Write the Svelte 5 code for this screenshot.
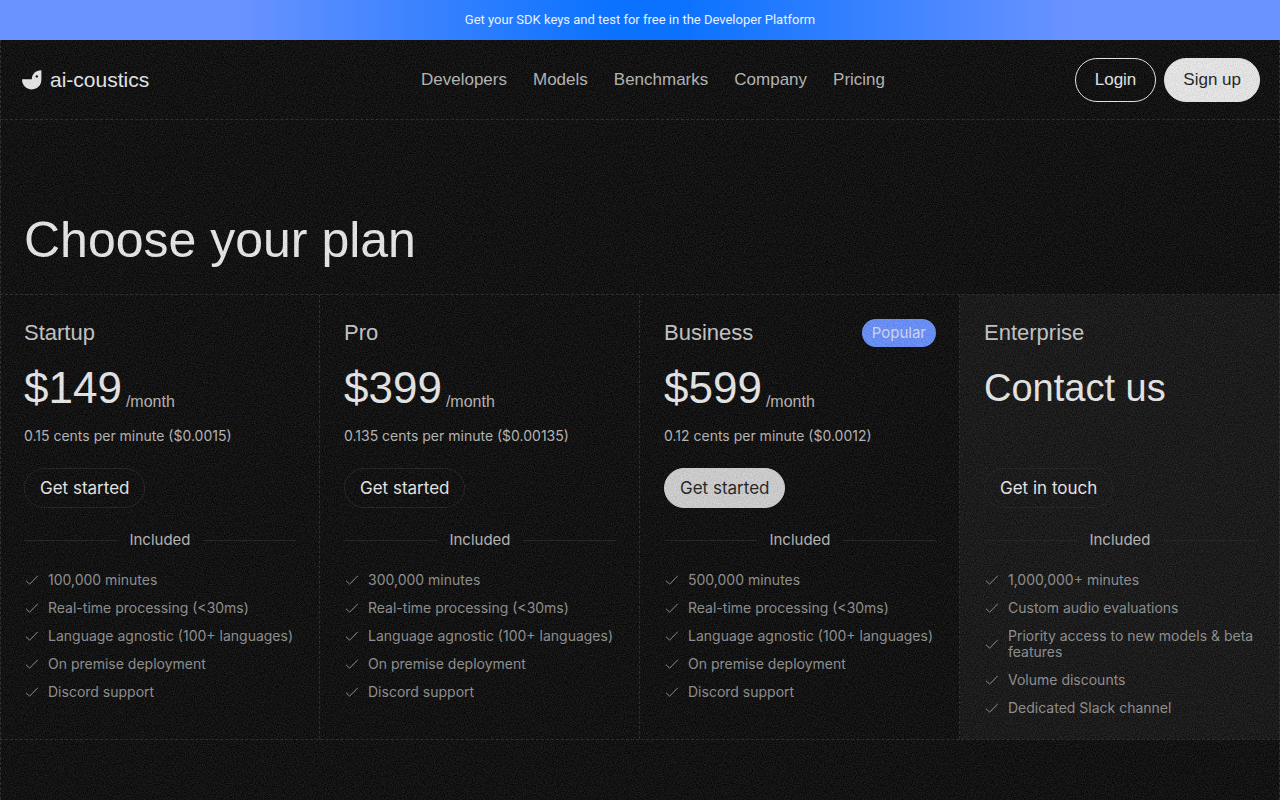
<script lang="ts">
    type Plan = {
        name: string;
        price: string;
        period?: string;
        rate?: string;
        cta: string;
        popular?: boolean;
        muted?: boolean;
        features: string[];
    };

    const links = ["Developers", "Models", "Benchmarks", "Company", "Pricing"];

    const common = [
        "Real-time processing (<30ms)",
        "Language agnostic (100+ languages)",
        "On premise deployment",
        "Discord support",
    ];

    const plans: Plan[] = [
        {
            name: "Startup",
            price: "$149",
            period: "/month",
            rate: "0.15 cents per minute ($0.0015)",
            cta: "Get started",
            features: ["100,000 minutes", ...common],
        },
        {
            name: "Pro",
            price: "$399",
            period: "/month",
            rate: "0.135 cents per minute ($0.00135)",
            cta: "Get started",
            features: ["300,000 minutes", ...common],
        },
        {
            name: "Business",
            price: "$599",
            period: "/month",
            rate: "0.12 cents per minute ($0.0012)",
            cta: "Get started",
            popular: true,
            features: ["500,000 minutes", ...common],
        },
        {
            name: "Enterprise",
            price: "Contact us",
            cta: "Get in touch",
            muted: true,
            features: [
                "1,000,000+ minutes",
                "Custom audio evaluations",
                "Priority access to new models & beta features",
                "Volume discounts",
                "Dedicated Slack channel",
            ],
        },
    ];
</script>

<a class="banner" href="#platform">Get your SDK keys and test for free in the Developer Platform</a>

<div class="page">
    <header class="header">
        <a class="logo" href="#home">
            <svg width="20" height="20" viewBox="0 0 20 20" aria-hidden="true">
                <path
                    fill="currentColor"
                    fill-rule="evenodd"
                    d="M0 9.3H9.8C9.8 4 13.6 0.2 19.4 0.2V9.6C19.4 15.4 15.4 19.4 9.8 19.4C4.2 19.4 0 15.2 0 9.3ZM14.8 5.2a1.2 1.2 0 1 0 0 2.4a1.2 1.2 0 1 0 0-2.4Z"
                />
            </svg>
            <span>ai-coustics</span>
        </a>
        <nav class="nav">
            {#each links as link}
                <a href={`#${link.toLowerCase()}`}>{link}</a>
            {/each}
        </nav>
        <div class="account">
            <button class="pill outline">Login</button>
            <button class="pill solid">Sign up</button>
        </div>
    </header>

    <main>
        <h1>Choose your plan</h1>
        <div class="plans">
            {#each plans as plan}
                <section class="plan" class:muted={plan.muted}>
                    <div class="plan-head">
                        <h2>{plan.name}</h2>
                        {#if plan.popular}
                            <span class="badge">Popular</span>
                        {/if}
                    </div>
                    <p class="price" class:contact={!plan.period}>
                        <span class="amount">{plan.price}</span>
                        {#if plan.period}
                            <span class="period">{plan.period}</span>
                        {/if}
                    </p>
                    <p class="rate">{plan.rate ?? ""}</p>
                    <button class="cta" class:primary={plan.popular}>{plan.cta}</button>
                    <div class="divider">Included</div>
                    <ul>
                        {#each plan.features as feature}
                            <li>
                                <svg width="16" height="16" viewBox="0 0 16 16" fill="none" aria-hidden="true">
                                    <path d="M2 8.7L5.6 12.2L13.8 3.8" stroke="currentColor" />
                                </svg>
                                <span>{feature}</span>
                            </li>
                        {/each}
                    </ul>
                </section>
            {/each}
        </div>
    </main>

    <!-- Film grain over everything below the banner -->
    <svg class="grain" aria-hidden="true">
        <filter id="grain" x="0" y="0" width="100%" height="100%" color-interpolation-filters="sRGB">
            <feTurbulence type="fractalNoise" baseFrequency="0.9" numOctaves="3" stitchTiles="stitch" />
            <feColorMatrix values="1.8 0 0 0 -0.38  1.8 0 0 0 -0.38  1.8 0 0 0 -0.38  0 0 0 0 1" />
        </filter>
        <rect width="100%" height="100%" filter="url(#grain)" />
    </svg>
</div>

<style>
    :global(body) {
      margin: 0;
      background: #060606;
    }

    :global(#app) {
      display: flex;
      flex-direction: column;
      min-height: 100vh;
      font-family: Inter, "Liberation Sans", sans-serif;
      color: #ececec;
    }

    a {
      color: inherit;
      text-decoration: none;
    }

    button {
      font: inherit;
      cursor: pointer;
    }

    h1, h2, p, ul {
      margin: 0;
      padding: 0;
      font-weight: 400;
    }

    .banner {
      display: block;
      background: linear-gradient(90deg, #6b93ff 18%, #0a72ff 48%, #0a72ff 53%, #6b93ff 84%);
      font-family: Roboto, sans-serif;
      font-size: 13px;
      line-height: 40px;
      text-align: center;
      color: #e8f0ff;
    }

    .page {
      position: relative;
      flex: 1;

      /* side rules, laid over the plan backgrounds */
      &::before {
        content: "";
        position: absolute;
        inset: 0;
        border-inline: 1px dashed #262626;
        pointer-events: none;
      }
    }

    .header {
      display: grid;
      grid-template-columns: 1fr auto 1fr;
      align-items: center;
      height: 79px;
      padding-inline: 22px 20px;
      border-bottom: 1px dashed #262626;
      font-family: "Liberation Sans", Arial, sans-serif;
    }

    .logo {
      display: flex;
      align-items: center;
      gap: 8px;
      font-size: 21px;
    }

    .nav {
      display: flex;
      gap: 26px;
      margin-left: 24px;
      font-size: 17px;
      color: #b8b8b8;
    }

    .account {
      display: flex;
      justify-content: flex-end;
      gap: 8px;
    }

    .pill {
      height: 44px;
      padding: 0 19px;
      border: 1px solid #ececec;
      border-radius: 22px;
      font-size: 17px;

      &.outline {
        background: transparent;
        color: #ececec;
      }

      &.solid {
        padding: 0 18px;
        background: #ececec;
        color: #1a1a1a;
      }
    }

    h1 {
      padding: 88px 24px 22px;
      font-family: "Liberation Sans", Arial, sans-serif;
      font-size: 50px;
      line-height: 64px;
    }

    .plans {
      display: grid;
      grid-template-columns: repeat(4, 1fr);
      border-block: 1px dashed #262626;
    }

    .plan {
      padding: 24px 23px 23px 24px;
      border-right: 1px dashed #262626;

      &.muted {
        background: #101010;
      }
    }

    .plan-head {
      display: flex;
      align-items: center;
      justify-content: space-between;
      height: 28px;
    }

    h2 {
      font-family: "Liberation Sans", Arial, sans-serif;
      font-size: 22px;
      line-height: 28px;
      color: #c8c8c8;
    }

    .badge {
      padding: 0 10px;
      border-radius: 14px;
      background: #668fff;
      font-size: 15px;
      line-height: 28px;
      color: #d4ddf5;
    }

    .price {
      display: flex;
      align-items: flex-end;
      gap: 4px;
      height: 65px;
      font-family: "Liberation Sans", Arial, sans-serif;
    }

    .amount {
      font-size: 44px;
      line-height: 48px;
    }

    .contact .amount {
      font-size: 38px;
    }

    .period {
      font-size: 16px;
      line-height: 20px;
      color: #b8b8b8;
    }

    .rate {
      height: 20px;
      padding-top: 14px;
      font-size: 14px;
      line-height: 20px;
      color: #b8b8b8;
    }

    .cta {
      height: 40px;
      margin-top: 22px;
      padding: 0 15px;
      border: 1px solid #1c1c1c;
      border-radius: 20px;
      background: transparent;
      font-size: 17px;
      color: #ececec;

      &.primary {
        border-color: #d2d2d2;
        background: #d2d2d2;
        color: #1a1a1a;
      }
    }

    .divider {
      display: flex;
      align-items: center;
      gap: 12px;
      margin-top: 22px;
      font-size: 15px;
      line-height: 20px;
      color: #b8b8b8;

      &::before, &::after {
        content: "";
        flex: 1;
        height: 1px;
        background: #1c1c1c;
      }
    }

    ul {
      display: grid;
      gap: 12px;
      margin-top: 22px;
      list-style: none;
      font-size: 14px;
      line-height: 16px;
      color: #8f8f8f;
    }

    li {
      display: flex;
      align-items: center;
      gap: 8px;
    }

    li svg {
      flex: none;
    }

    .grain {
      position: absolute;
      inset: 0;
      width: 100%;
      height: 100%;
      opacity: 0.1;
      pointer-events: none;
    }
</style>
